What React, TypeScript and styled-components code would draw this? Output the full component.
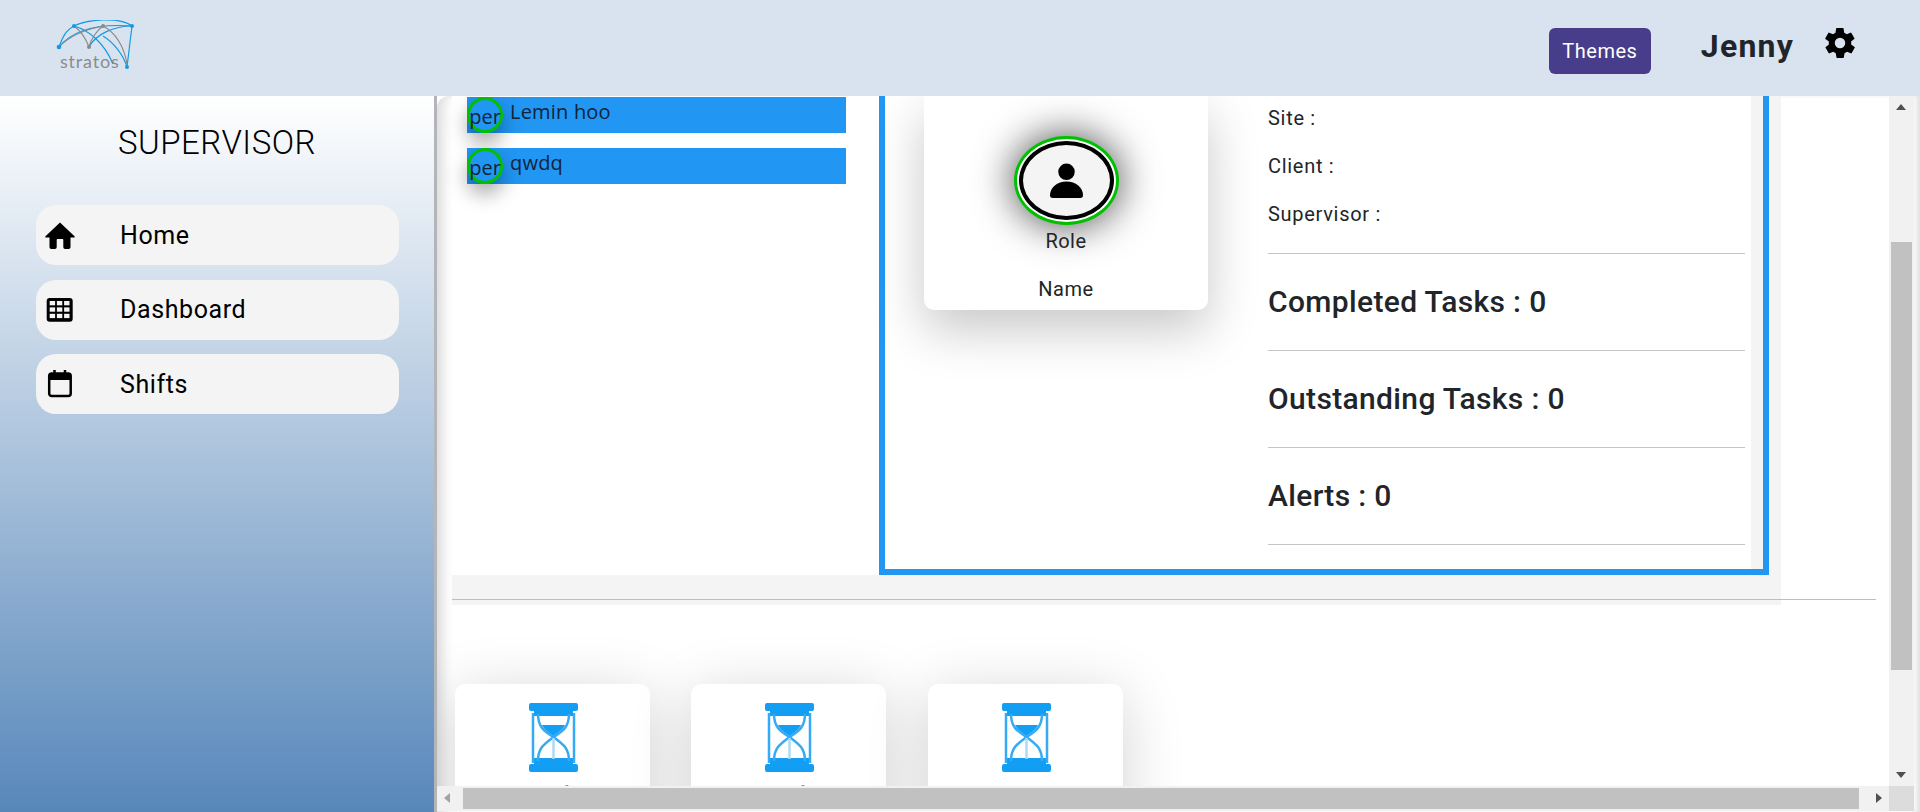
import React from "react";
import styled, { createGlobalStyle } from "styled-components";

const GlobalStyle = createGlobalStyle`
  html, body {
    margin: 0;
    padding: 0;
    height: 100%;
    overflow: hidden;
    background: #fff;
    font-family: Roboto, "Liberation Sans", sans-serif;
    color: #212529;
  }
  * { box-sizing: border-box; }
`;

const Page = styled.div`
  width: 1920px;
  height: 812px;
  display: flex;
  flex-direction: column;
  overflow: hidden;
`;

const Header = styled.header`
  height: 96px;
  flex: none;
  background: #d9e3ef;
  display: flex;
  align-items: flex-start;
  padding: 0 65px 0 56px;
`;

const Logo = styled.svg`
  width: 84px;
  height: 72px;
  flex: none;
  margin-top: 20px;
`;

const HeaderRight = styled.div`
  margin-left: auto;
  display: flex;
  align-items: flex-start;
`;

const ThemesButton = styled.button`
  width: 102px;
  height: 46px;
  margin-top: 28px;
  border: 0;
  border-radius: 6px;
  background: #483d8b;
  color: #fff;
  font: 400 20px Roboto, sans-serif;
  letter-spacing: 0.5px;
`;

const UserName = styled.div`
  margin: 24px 0 0 50px;
  font-size: 32px;
  line-height: 44px;
  font-weight: 700;
  letter-spacing: 1.2px;
  color: #212529;
`;

const GearIcon = styled.svg`
  width: 30px;
  height: 30px;
  margin: 28px 0 0 31px;
`;

const Body = styled.div`
  flex: 1;
  min-height: 0;
  display: flex;
`;

const Sidebar = styled.aside`
  width: 437px;
  flex: none;
  background: linear-gradient(180deg, #ffffff 0%, #5787ba 100%);
  border-right: 3px solid #b3b5b8;
  padding: 0 36px;
`;

const RoleTitle = styled.h1`
  margin: 27px 0 42px;
  font-size: 33px;
  line-height: 40px;
  font-weight: 300;
  letter-spacing: 0.5px;
  text-align: center;
  color: #000;
`;

const NavList = styled.nav`
  display: flex;
  flex-direction: column;
  gap: 14.5px;
  width: 363px;
`;

const NavItem = styled.div`
  height: 60px;
  display: flex;
  align-items: center;
  background: #f4f4f4;
  border-radius: 20px;
  font-size: 25px;
  letter-spacing: 0.6px;
  color: #000;
`;

const NavIcon = styled.svg`
  width: 32px;
  height: 32px;
  margin: 0 44px 0 8px;
  flex: none;
`;

const Main = styled.main`
  flex: 1;
  min-width: 0;
  display: flex;
  flex-direction: column;
  background: #fff;
  box-shadow: inset 14px 0 12px -8px #dcdcdc, inset -6px 0 6px -3px #dcdcdc;
  border-top-left-radius: 12px;
  position: relative;
`;

const ViewRow = styled.div`
  flex: 1;
  min-height: 0;
  display: flex;
  padding-right: 6px;
`;

const Viewport = styled.div`
  flex: 1;
  min-width: 0;
  overflow: hidden;
  padding-left: 15px;
`;

const TopBlock = styled.section`
  width: 1329px;
  height: 509px;
  background: #f4f4f4;
  display: flex;
  align-items: flex-start;
`;

const ListColumn = styled.div`
  width: 427px;
  height: 479px;
  flex: none;
  background: #fff;
  padding: 1px 0 0 15px;
  display: flex;
  flex-direction: column;
  gap: 15px;
`;

const PersonRow = styled.div`
  width: 379px;
  height: 36px;
  background: #2196f3;
  display: flex;
  align-items: flex-start;
  font-family: "Open Sans", sans-serif;
  font-size: 20px;
  letter-spacing: 0.2px;
  color: #10243a;
`;

const PersonBadge = styled.div`
  width: 36px;
  height: 36px;
  flex: none;
  border: 3px solid #00c000;
  border-radius: 50%;
  box-shadow: 0 10px 20px rgba(0, 0, 0, 0.35);
  display: flex;
  align-items: center;
  justify-content: center;
  font-size: 20px;
  line-height: 1;
  letter-spacing: 0;
  white-space: nowrap;
  padding-top: 3px;
`;

const PersonName = styled.span`
  margin-left: 7px;
  line-height: 29px;
`;

const Frame = styled.div`
  width: 890px;
  height: 479px;
  flex: none;
  border: solid #2196f3;
  border-width: 0 6px 6px;
  background: linear-gradient(to left, #f4f4f4 12px, #fff 12px);
  display: flex;
`;

const ProfileCard = styled.div`
  width: 284px;
  height: 214px;
  margin-left: 39px;
  flex: none;
  background: #fff;
  border-radius: 0 0 10px 10px;
  box-shadow: 0 20px 50px rgba(0, 0, 0, 0.22);
  display: flex;
  flex-direction: column;
  align-items: center;
  font-size: 20px;
  letter-spacing: 0.5px;
  color: #212529;
`;

const Avatar = styled.div`
  width: 105px;
  height: 89px;
  margin-top: 40px;
  border: 3px solid #00c000;
  border-radius: 50%;
  background: #fff;
  padding: 2px;
  box-shadow: 0 0 40px rgba(0, 0, 0, 0.75);
`;

const AvatarInner = styled.div`
  height: 100%;
  border: 4px solid #000;
  border-radius: 50%;
  background: #f4f4f4;
  display: flex;
  align-items: center;
  justify-content: center;
`;

const AvatarIcon = styled.svg`
  width: 33px;
  height: 36px;
`;

const RoleLabel = styled.div`
  margin-top: 5px;
  line-height: 22px;
`;

const NameLabel = styled.div`
  margin-top: 26px;
  line-height: 22px;
`;

const Stats = styled.div`
  width: 477px;
  margin-left: 60px;
  flex: none;
  display: flex;
  flex-direction: column;
`;

const InfoLine = styled.div<{ $first?: boolean }>`
  height: 48px;
  margin-top: ${(p) => (p.$first ? "-2px" : "0")};
  display: flex;
  align-items: center;
  font-size: 20px;
  letter-spacing: 0.7px;
  color: #212529;
`;

const InfoGroup = styled.div`
  padding-bottom: 15px;
  border-bottom: 1px solid #c4c4c4;
`;

const StatLine = styled.div`
  height: 97px;
  display: flex;
  align-items: center;
  font-size: 30px;
  font-weight: 500;
  letter-spacing: 0.35px;
  color: #212529;
  border-bottom: 1px solid #c4c4c4;
  flex: none;
  padding-bottom: 2px;
`;

const Rule = styled.hr`
  margin: -6px 13px 0 0;
  height: 1px;
  border: 0;
  background: #bdbdbd;
`;

const CardRow = styled.section`
  display: flex;
  align-items: flex-start;
  margin: 84px 0 0 3px;
`;

const TaskCard = styled.div<{ $gap: number }>`
  width: 195px;
  height: 240px;
  margin-right: ${(p) => p.$gap}px;
  flex: none;
  background: #fff;
  border-radius: 10px;
  box-shadow: 0 10px 60px rgba(0, 0, 0, 0.18);
  padding-top: 19px;
  display: flex;
  flex-direction: column;
  align-items: center;
  font-size: 20px;
  letter-spacing: 0.5px;
  color: #212529;
`;

const Hourglass = styled.svg`
  width: 49px;
  height: 69px;
  margin-left: 2px;
  flex: none;
`;

const TaskLabel = styled.div`
  margin-top: 10px;
  line-height: 24px;
`;

const VScroll = styled.div`
  width: 25px;
  flex: none;
  background: #f1f1f1;
  display: flex;
  flex-direction: column;
  align-items: center;
  position: relative;
`;

const VThumb = styled.div`
  position: absolute;
  top: 146px;
  left: 2px;
  right: 2px;
  height: 428px;
  background: #c1c1c1;
`;

const Arrow = styled.i<{ $dir: "up" | "down" | "left" | "right" }>`
  position: absolute;
  width: 0;
  height: 0;
  border: 5.5px solid transparent;
  ${(p) =>
    p.$dir === "up"
      ? "top: 8px; left: 7px; border-top: 0; border-bottom: 6px solid #505050;"
      : p.$dir === "down"
      ? "bottom: 8px; left: 7px; border-bottom: 0; border-top: 6px solid #505050;"
      : p.$dir === "left"
      ? "top: 7px; left: 7px; border-left: 0; border-right: 6px solid #a3a3a3;"
      : "top: 7px; right: 7px; border-right: 0; border-left: 6px solid #505050;"}
`;

const HScrollRow = styled.div`
  height: 26px;
  flex: none;
  display: flex;
  padding: 0 6px 1px 0;
`;

const HScroll = styled.div`
  flex: 1;
  background: #f1f1f1;
  position: relative;
`;

const HThumb = styled.div`
  position: absolute;
  top: 2px;
  bottom: 2px;
  left: 26px;
  width: 1396px;
  background: #c1c1c1;
`;

const ScrollCorner = styled.div`
  width: 25px;
  flex: none;
  background: #dcdcdc;
`;

const GEAR =
  "M19.4 13a7.6 7.6 0 0 0 0-2l2.1-1.6a.5.5 0 0 0 .1-.6l-2-3.5a.5.5 0 0 0-.6-.2l-2.5 1a7.4 7.4 0 0 0-1.7-1l-.4-2.6a.5.5 0 0 0-.5-.5h-4a.5.5 0 0 0-.5.5l-.4 2.6a7.4 7.4 0 0 0-1.7 1l-2.5-1a.5.5 0 0 0-.6.2l-2 3.5a.5.5 0 0 0 .1.6L4.6 11a7.6 7.6 0 0 0 0 2l-2.1 1.6a.5.5 0 0 0-.1.6l2 3.5c.1.2.4.3.6.2l2.5-1c.5.4 1.1.7 1.7 1l.4 2.6c0 .3.2.5.5.5h4c.3 0 .5-.2.5-.5l.4-2.6c.6-.3 1.2-.6 1.7-1l2.5 1c.2.1.5 0 .6-.2l2-3.5a.5.5 0 0 0-.1-.6L19.4 13ZM12 15.5a3.5 3.5 0 1 1 0-7 3.5 3.5 0 0 1 0 7Z";

const HourglassIcon = () => (
  <Hourglass viewBox="0 0 49 69">
    <g fill="#129ff3">
      <rect x="0" y="0" width="49" height="8" rx="2" />
      <rect x="5" y="6" width="39" height="7" />
      <rect x="0" y="61" width="49" height="8" rx="2" />
      <rect x="5" y="55" width="39" height="7" />
      <path d="M13 22h23c-1.500 4-6 7-11.500 11C19 29 14.500 26 13 22Z" />
    </g>
    <g fill="none" stroke="#35abf5" strokeWidth="2.500">
      <path d="M4 10v50M45 10v50" />
      <path d="M9 11c0 13 6 17 15.500 23C34 41 40 45 40 58" />
      <path d="M40 11c0 13-6 17-15.500 23C15 41 9 45 9 58" />
    </g>
    <path d="M24.500 35v21" stroke="#a8dafa" strokeWidth="2.500" />
  </Hourglass>
);

// only the tips of these labels show above the scrollbar
const tasks = [
  { label: "Draft", gap: 41 },
  { label: "Draft", gap: 42 },
  { label: "Unblocked", gap: 0 },
];

const dashCells = [0, 1, 2].flatMap((r) => [0, 1, 2].map((c) => ({ r, c })));

export default function App() {
  return (
    <Page>
      <GlobalStyle />
      <Header>
        <Logo viewBox="0 0 84 72">
          <g fill="none" stroke="#139ae0" strokeWidth="1.200">
            <path d="M3 27C8 13 12 9 18 6c14 4 30 16 39 38" />
            <path d="M3 27C14 13 34 3 76 6" />
            <path d="M76 6 71 47" />
            <path d="M18 6C30 0 62-4 76 6" />
            <path d="M33 27C40 14 58 6 76 6" />
            <path d="M47 16c10 6 20 18 24 31" />
          </g>
          <g fill="none" stroke="#8a8a8a" strokeWidth="1.200">
            <path d="M3 27C14 15 32 9 47 6" />
            <path d="M18 6c7 5 12 13 15 21" />
            <path d="M33 27c2-8 8-17 14-21 12 6 21 20 24 38" />
          </g>
          <g fill="#139ae0">
            <circle cx="3" cy="27" r="2.300" />
            <circle cx="18" cy="6" r="2" />
            <circle cx="76" cy="6" r="2" />
            <circle cx="71" cy="47" r="2" />
          </g>
          <g fill="#8a8a8a">
            <circle cx="33" cy="27" r="2" />
            <circle cx="47" cy="6" r="2" />
          </g>
          <text x="4" y="48" fontFamily="Lato, sans-serif" fontSize="18" fill="#8c8c8c" letterSpacing="0.800">
            stratos
          </text>
        </Logo>
        <HeaderRight>
          <ThemesButton>Themes</ThemesButton>
          <UserName>Jenny</UserName>
          <GearIcon viewBox="2 2 20 20">
            <path d={GEAR} fill="#000" />
          </GearIcon>
        </HeaderRight>
      </Header>
      <Body>
        <Sidebar>
          <RoleTitle>SUPERVISOR</RoleTitle>
          <NavList>
            <NavItem>
              <NavIcon viewBox="0 0 32 32">
                <path
                  d="M16 3.500 1.500 17.200c-.6.6-.2 1.400.5 1.400h3.500V28c0 1 .8 2 1.800 2H11c1 0 1.700-1 1.700-2v-7c0-.6.400-1 1-1h4.600c.6 0 1 .4 1 1v7c0 1 .7 2 1.700 2h3.700c1 0 1.800-1 1.800-2v-9.400H30c.7 0 1.100-.8.500-1.400L16 3.500Z"
                  fill="#000"
                />
              </NavIcon>
              Home
            </NavItem>
            <NavItem>
              <NavIcon viewBox="0 0 32 32">
                <rect x="2.700" y="4" width="26" height="23.700" rx="3" fill="#000" />
                {dashCells.map(({ r, c }) => (
                  <rect key={`${r}-${c}`} x={5.7 + c * 7.2} y={7 + r * 6.4} width="5.400" height="4.300" fill="#f4f4f4" />
                ))}
              </NavIcon>
              Dashboard
            </NavItem>
            <NavItem>
              <NavIcon viewBox="0 0 32 32">
                <rect x="5.200" y="5.500" width="21.500" height="22.500" rx="2.500" fill="none" stroke="#000" strokeWidth="2.500" />
                <path d="M5 6h22v6H5z" fill="#000" />
                <path d="M10.500 2v5M21 2v5" stroke="#000" strokeWidth="2.500" />
              </NavIcon>
              Shifts
            </NavItem>
          </NavList>
        </Sidebar>
        <Main>
          <ViewRow>
            <Viewport>
              <TopBlock>
                <ListColumn>
                  <PersonRow>
                    <PersonBadge>per</PersonBadge>
                    <PersonName>Lemin hoo</PersonName>
                  </PersonRow>
                  <PersonRow>
                    <PersonBadge>per</PersonBadge>
                    <PersonName>qwdq</PersonName>
                  </PersonRow>
                </ListColumn>
                <Frame>
                  <ProfileCard>
                    <Avatar>
                      <AvatarInner>
                        <AvatarIcon viewBox="0 0 36 38">
                          <circle cx="18" cy="9" r="9" fill="#000" />
                          <path
                            d="M3 37.500c-2 0-3-1-3-3C0 26 8 19.500 18 19.500S36 26 36 34.500c0 2-1 3-3 3H3Z"
                            fill="#000"
                          />
                        </AvatarIcon>
                      </AvatarInner>
                    </Avatar>
                    <RoleLabel>Role</RoleLabel>
                    <NameLabel>Name</NameLabel>
                  </ProfileCard>
                  <Stats>
                    <InfoGroup>
                      <InfoLine $first>Site :</InfoLine>
                      <InfoLine>Client :</InfoLine>
                      <InfoLine>Supervisor :</InfoLine>
                    </InfoGroup>
                    <StatLine>Completed Tasks : 0</StatLine>
                    <StatLine>Outstanding Tasks : 0</StatLine>
                    <StatLine>Alerts : 0</StatLine>
                  </Stats>
                </Frame>
              </TopBlock>
              <Rule />
              <CardRow>
                {tasks.map((t, i) => (
                  <TaskCard key={i} $gap={t.gap}>
                    <HourglassIcon />
                    <TaskLabel>{t.label}</TaskLabel>
                  </TaskCard>
                ))}
              </CardRow>
            </Viewport>
            <VScroll>
              <Arrow $dir="up" />
              <VThumb />
              <Arrow $dir="down" />
            </VScroll>
          </ViewRow>
          <HScrollRow>
            <HScroll>
              <Arrow $dir="left" />
              <HThumb />
              <Arrow $dir="right" />
            </HScroll>
            <ScrollCorner />
          </HScrollRow>
        </Main>
      </Body>
    </Page>
  );
}
